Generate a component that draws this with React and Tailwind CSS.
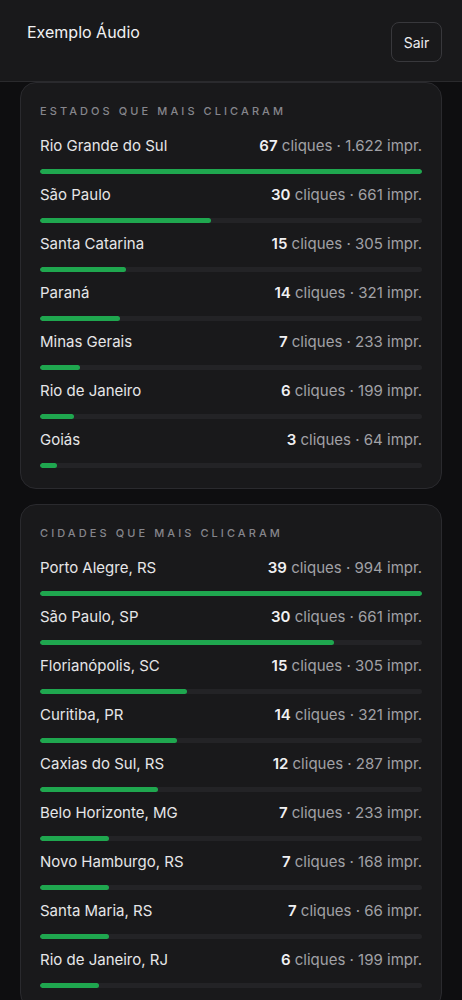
import React from 'react'

const estados = [
  { nome: 'Rio Grande do Sul', cliques: 67, impr: '1.622' },
  { nome: 'São Paulo', cliques: 30, impr: '661' },
  { nome: 'Santa Catarina', cliques: 15, impr: '305' },
  { nome: 'Paraná', cliques: 14, impr: '321' },
  { nome: 'Minas Gerais', cliques: 7, impr: '233' },
  { nome: 'Rio de Janeiro', cliques: 6, impr: '199' },
  { nome: 'Goiás', cliques: 3, impr: '64' },
]

const cidades = [
  { nome: 'Porto Alegre, RS', cliques: 39, impr: '994' },
  { nome: 'São Paulo, SP', cliques: 30, impr: '661' },
  { nome: 'Florianópolis, SC', cliques: 15, impr: '305' },
  { nome: 'Curitiba, PR', cliques: 14, impr: '321' },
  { nome: 'Caxias do Sul, RS', cliques: 12, impr: '287' },
  { nome: 'Belo Horizonte, MG', cliques: 7, impr: '233' },
  { nome: 'Novo Hamburgo, RS', cliques: 7, impr: '168' },
  { nome: 'Santa Maria, RS', cliques: 7, impr: '66' },
  { nome: 'Rio de Janeiro, RJ', cliques: 6, impr: '199' },
]

function RankingCard({ titulo, itens }) {
  const max = Math.max(...itens.map(i => i.cliques))
  return (
    <section className="rounded-2xl border border-[#2a2a2e] bg-[#19191b] px-[19px] pt-5 pb-5">
      <h2 className="text-[11px] leading-4 font-medium uppercase tracking-[0.28em] text-[#86868c] mb-[15px]">
        {titulo}
      </h2>
      <div className="flex flex-col gap-[9px]">
        {itens.map(item => (
          <div key={item.nome}>
            <div className="flex items-center justify-between text-[15px] leading-6">
              <span className="text-[#e6e6e8]">{item.nome}</span>
              <span className="text-[#a1a1a6]">
                <span className="font-semibold text-[#f0f0f2]">{item.cliques}</span> cliques · {item.impr} impr.
              </span>
            </div>
            <div className="mt-[11px] h-[5px] rounded-full bg-[#232326] overflow-hidden">
              <div
                className="h-full rounded-full bg-[#1fa74f]"
                style={{ width: `${(item.cliques / max) * 100}%` }}
              />
            </div>
          </div>
        ))}
      </div>
    </section>
  )
}

export default function App() {
  return (
    <div className="min-h-screen bg-[#0e0e10] font-['Inter','Noto_Sans',sans-serif] antialiased">
      {/* Header */}
      <header className="bg-[#19191b] border-b border-[#2a2a2d] pl-[27px] pr-5 pt-[22px] pb-[19px] flex items-start justify-between">
        <h1 className="text-[16px] leading-5 font-normal text-[#f2f2f4]">Exemplo Áudio</h1>
        <button className="h-10 w-[51px] rounded-lg border border-[#38383c] text-[14px] font-normal text-[#ededf0]">
          Sair
        </button>
      </header>

      <main className="px-5 flex flex-col gap-[15px] pb-8">
        <RankingCard titulo="Estados que mais clicaram" itens={estados} />
        <RankingCard titulo="Cidades que mais clicaram" itens={cidades} />
      </main>
    </div>
  )
}
